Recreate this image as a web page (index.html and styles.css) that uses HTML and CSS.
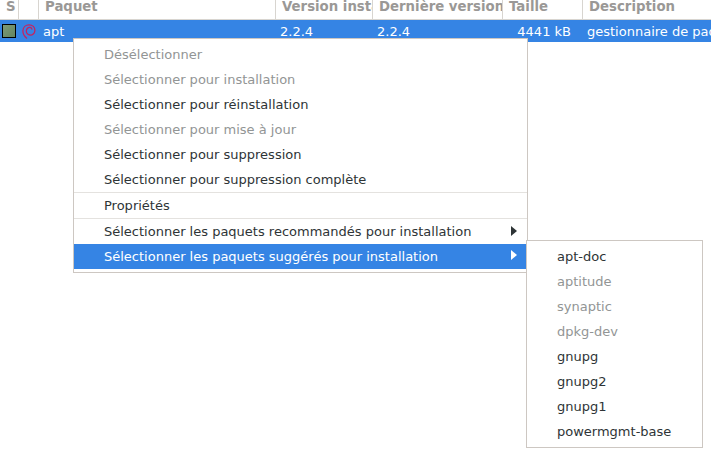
FILE: index.html
```html
<!DOCTYPE html>
<html lang="fr">
<head>
  <meta charset="UTF-8" />
  <title>Paquets</title>
  <link rel="stylesheet" href="styles.css">
</head>
<body>
  <div class="table">
    <div class="row head">
      <div class="cell c-s">S</div>
      <div class="cell c-i"></div>
      <div class="cell c-name">Paquet</div>
      <div class="cell c-inst">Version installée</div>
      <div class="cell c-last">Dernière version</div>
      <div class="cell c-size">Taille</div>
      <div class="cell c-desc">Description</div>
    </div>
    <div class="row selected">
      <div class="cell c-s"><span class="check"></span></div>
      <div class="cell c-i">
        <svg class="swirl" width="14" height="15" viewBox="0 0 14 15" fill="none" stroke="#c4245f" stroke-width="1.3">
          <path d="M5 14.5C2.6 12.6 .8 10 .9 6.8C1 3 3.8 .8 7 .8C10.6 .8 13 3.2 12.9 6.4C12.8 9.4 10.4 11.4 7.8 11C5.4 10.6 4 8.6 4.4 6.4C4.8 4.4 6.4 3.2 8 3.4C9.2 3.6 10 4.6 9.8 5.6"/>
        </svg>
      </div>
      <div class="cell c-name">apt</div>
      <div class="cell c-inst">2.2.4</div>
      <div class="cell c-last">2.2.4</div>
      <div class="cell c-size num">4441 kB</div>
      <div class="cell c-desc">gestionnaire de paquets</div>
    </div>
  </div>

  <!-- context menu -->
  <div class="menu main-menu">
    <div class="item off">Désélectionner</div>
    <div class="item off">Sélectionner pour installation</div>
    <div class="item">Sélectionner pour réinstallation</div>
    <div class="item off">Sélectionner pour mise à jour</div>
    <div class="item">Sélectionner pour suppression</div>
    <div class="item">Sélectionner pour suppression complète</div>
    <div class="sep"></div>
    <div class="item">Propriétés</div>
    <div class="sep"></div>
    <div class="item arrow">Sélectionner les paquets recommandés pour installation</div>
    <div class="item arrow active">Sélectionner les paquets suggérés pour installation</div>
  </div>

  <div class="menu sub-menu">
    <div class="item">apt-doc</div>
    <div class="item off">aptitude</div>
    <div class="item off">synaptic</div>
    <div class="item off">dpkg-dev</div>
    <div class="item">gnupg</div>
    <div class="item">gnupg2</div>
    <div class="item">gnupg1</div>
    <div class="item">powermgmt-base</div>
  </div>
</body>
</html>
```

FILE: styles.css
```css
* {
  margin: 0;
  padding: 0;
  box-sizing: border-box;
}
body {
  width: 711px;
  height: 453px;
  overflow: hidden;
  background: #fff;
  font-family: "DejaVu Sans", sans-serif;
  font-size: 13px;
  color: #2e3436;
}

/* Package list */
.row {
  display: flex;
  white-space: nowrap;
}
.cell {
  overflow: hidden;
  flex: none;
}
.head {
  height: 20px;
  border-bottom: 1px solid #d8d5d0;
  font-size: 13.3px;
  font-weight: bold;
  color: #9a9896;
  line-height: 13px;
}
.head .cell {
  border-right: 1px solid #d8d5d0;
  padding-left: 6px;
}
.head .c-desc {
  border-right: none;
}
.selected {
  height: 22px;
  background: #3584e4;
  color: #fff;
  line-height: 23px;
}
.selected .cell {
  padding-left: 4px;
}
.c-s { width: 19px; }
.c-i { width: 20px; }
.c-name { width: 237px; }
.c-inst { width: 97px; }
.c-last { width: 130px; }
.c-size { width: 80px; }
.c-desc { width: 128px; }
.selected .num {
  text-align: right;
  padding-right: 12px;
}
.selected .c-s,
.selected .c-i {
  padding: 4px 0 0 2px;
  display: flex;
  align-items: flex-start;
}
.selected .c-i {
  padding-left: 3px;
}
.check {
  width: 14px;
  height: 14px;
  border: 1px solid #000;
  background: linear-gradient(135deg, #7d9a78, #638560);
}

/* Menus */
.menu {
  position: absolute;
  background: #fff;
  border: 1px solid #cdc7c2;
  padding: 3px 0;
}
.main-menu {
  left: 73px;
  top: 38px;
  width: 455px;
  height: 235px;
}
.sub-menu {
  left: 526px;
  top: 240px;
  width: 177px;
  height: 208px;
}
.item {
  height: 25px;
  line-height: 25px;
  padding-left: 30px;
  white-space: nowrap;
  position: relative;
}
.off {
  color: #929595;
}
.active {
  background: #3584e4;
  color: #fff;
}
.sep {
  height: 1px;
  background: #e4e2df;
}
.arrow::after {
  content: "";
  position: absolute;
  right: 10px;
  top: 7px;
  border-left: 6px solid #2e3436;
  border-top: 5.5px solid transparent;
  border-bottom: 5.5px solid transparent;
}
.active.arrow::after {
  top: 6px;
  border-left-color: #fff;
}
```
